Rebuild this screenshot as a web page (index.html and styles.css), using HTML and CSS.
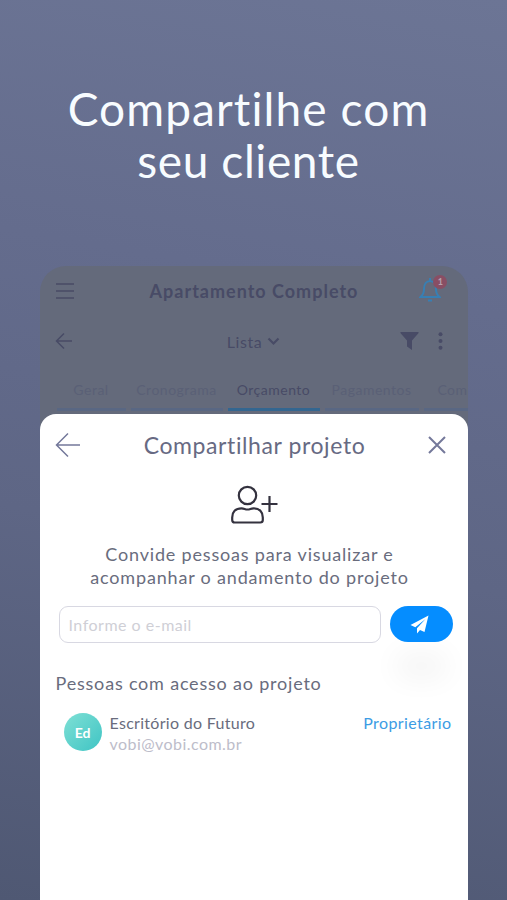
FILE: index.html
```html
<!DOCTYPE html>
<html lang="pt-BR">
<head>
    <meta charset="UTF-8">
    <meta name="viewport" content="width=device-width, initial-scale=1.0">
    <title>Compartilhar projeto</title>
    <link rel="stylesheet" href="styles.css">
</head>
<body>
    <h1 class="headline">Compartilhe com<br><span class="line2">seu cliente</span></h1>

    <main class="phone">
        <header class="top-bar">
            <svg class="menu" width="20" height="18" viewBox="0 0 20 18"><path d="M1 2h18M1 9h18M1 16h18"/></svg>
            <strong class="project-name">Apartamento Completo</strong>
            <div class="bell">
                <svg width="22" height="26" viewBox="0 0 22 26"><path d="M11 1v3M1.500 20h19c-2.500-2-3.500-4-3.500-8 0-5-2.500-8-6-8s-6 3-6 8c0 4-1 6-3.500 8z"/><path d="M9 23.500h4"/></svg>
                <span class="badge">1</span>
            </div>
        </header>

        <div class="view-bar">
            <svg class="back" width="18" height="18" viewBox="0 0 18 18"><path d="M9 1.500L1.500 9 9 16.500M1.500 9H17"/></svg>
            <div class="view-select"><span class="view-name">Lista</span><svg width="13" height="9" viewBox="0 0 13 9"><path d="M1.500 1.500l5 5 5-5"/></svg></div>
            <div class="view-tools">
                <svg class="filter" width="19" height="20" viewBox="0 0 19 20"><path d="M.5 1h18q.3.800-.3 1.500L12 9.500V19l-5-3.500v-6L.8 2.500Q.2 1.800.5 1z"/></svg>
                <svg class="dots" width="5" height="18" viewBox="0 0 5 18"><circle cx="2.500" cy="2.200" r="2"/><circle cx="2.500" cy="9" r="2"/><circle cx="2.500" cy="15.800" r="2"/></svg>
            </div>
        </div>

        <nav class="tabs">
            <span class="tab tab-geral">Geral</span>
            <span class="tab tab-crono">Cronograma</span>
            <span class="tab tab-orc active">Orçamento</span>
            <span class="tab tab-pag">Pagamentos</span>
            <span class="tab tab-com">Com</span>
        </nav>

        <section class="sheet">
            <div class="sheet-header">
                <svg width="26" height="26" viewBox="0 0 26 26"><path d="M13 1.500L1.500 13 13 24.500M1.500 13H25"/></svg>
                <h2 class="sheet-title">Compartilhar projeto</h2>
                <svg class="close" width="18" height="18" viewBox="0 0 18 18"><path d="M1 1l16 16M17 1L1 17"/></svg>
            </div>

            <svg class="user-plus" width="48" height="40" viewBox="0 0 48 40">
                <circle cx="16.500" cy="10.500" r="8.700"/>
                <path d="M10.500 23.300c3 0 3.200 1.200 6 1.200s3-1.200 6-1.200c6 0 9.300 3.700 9.300 9.200v2.500q0 2.500-2.500 2.500H3.700q-2.500 0-2.500-2.500v-2.500c0-5.500 3.300-9.200 9.300-9.200z"/>
                <path d="M38.500 11v16M30.500 19h16"/>
            </svg>
            <p class="invite">Convide pessoas para visualizar e<br>acompanhar o andamento do projeto</p>

            <form class="email-form">
                <input class="email" type="text" placeholder="Informe o e-mail">
                <button class="send" type="button" aria-label="Enviar">
                    <svg width="19" height="19" viewBox="0 0 19 19"><path d="M18.500.5L.5 10l4.800 2.300L15.500 4 7 13.300V18.500l3-3.400 4.500 2z"/></svg>
                </button>
            </form>

            <h3 class="people-title">Pessoas com acesso ao projeto</h3>
            <div class="person">
                <span class="avatar">Ed</span>
                <div class="person-info">
                    <span class="person-name">Escritório do Futuro</span>
                    <span class="person-mail">vobi@vobi.com.br</span>
                </div>
                <span class="role">Proprietário</span>
            </div>
        </section>
    </main>
</body>
</html>
```
FILE: styles.css
```css
* {
    box-sizing: border-box;
}
body {
    margin: 0;
    height: 900px;
    overflow: hidden;
    display: flex;
    flex-direction: column;
    align-items: center;
    font-family: Lato, sans-serif;
    background: linear-gradient(190deg, #6c7595 0%, #646c8d 32%, #5e6685 60%, #4f5873 100%);
}
svg {
    display: block;
    fill: none;
    stroke: currentColor;
    stroke-width: 1.5;
    flex-shrink: 0;
}
.headline {
    margin: 83px 0 0;
    width: 497px;
    align-self: flex-start;
    text-align: center;
    font-size: 46px;
    line-height: 52px;
    font-weight: 400;
    letter-spacing: 1.1px;
    color: #f8fcff;
    white-space: nowrap;
}
.line2 {
    letter-spacing: 0.6px;
}
.phone {
    width: 428px;
    height: 634px;
    margin-top: 79px;
    border-radius: 26px 26px 0 0;
    background: #646a7b;
    color: #484b66;
    overflow: hidden;
    display: flex;
    flex-direction: column;
    flex-shrink: 0;
}

/* dimmed project screen */
.top-bar {
    height: 50px;
    padding: 0 19px 0 15px;
    display: flex;
    align-items: center;
    justify-content: space-between;
}
.project-name {
    margin-left: 14px;
    font-size: 18px;
    letter-spacing: 1px;
}
.bell {
    position: relative;
    width: 29px;
    color: #387fb3;
}
.bell svg {
    stroke-width: 2;
    margin-top: -2px;
}
.badge {
    position: absolute;
    top: -4px;
    left: 14px;
    width: 14px;
    height: 14px;
    border-radius: 50%;
    background: #894e64;
    color: #b5a1af;
    font-size: 9px;
    line-height: 14px;
    font-weight: 700;
    text-align: center;
}
.view-bar {
    height: 50px;
    padding: 0 24px 0 15px;
    display: flex;
    align-items: center;
    justify-content: space-between;
}
.view-select {
    display: flex;
    align-items: center;
    gap: 5px;
    margin-left: 34px;
    font-size: 16px;
    letter-spacing: 0.6px;
}
.view-select svg {
    stroke-width: 2.2;
}
.view-tools {
    display: flex;
    align-items: center;
    gap: 19px;
}
.view-tools svg {
    fill: currentColor;
    stroke: none;
}
.tabs {
    height: 48px;
    padding-left: 17px;
    display: flex;
    gap: 5px;
    font-size: 14px;
    color: #5a6076;
    white-space: nowrap;
}
.tab {
    flex-shrink: 0;
    padding-top: 15px;
    height: 45px;
    line-height: 17px;
    text-align: center;
    letter-spacing: 0.5px;
    border-bottom: 3px solid #596783;
}
.tab-geral {
    width: 69px;
}
.tab-crono {
    width: 92px;
}
.tab-orc {
    width: 92px;
}
.tab-pag {
    width: 94px;
}
.tab-com {
    width: 46px;
    padding-left: 12px;
}
.active {
    color: #484b66;
    border-color: #336690;
}

/* share sheet */
.sheet {
    flex: 1;
    border-radius: 16px 16px 0 0;
    background: #fff;
    color: #696c7d;
    display: flex;
    flex-direction: column;
}
.sheet-header {
    margin-top: 12px;
    height: 38px;
    padding: 0 21px 0 15px;
    display: flex;
    align-items: center;
    justify-content: space-between;
    color: #74789a;
}
.sheet-title {
    margin: 0;
    font-size: 23px;
    font-weight: 400;
    letter-spacing: 0.6px;
    color: #676a83;
}
.sheet-header .close {
    stroke-width: 2;
}
.user-plus {
    margin: 21px 0 0 191px;
    color: #34323f;
    stroke-width: 2.2;
}
.invite {
    margin: 18px 0 0;
    padding-right: 8px;
    text-align: center;
    font-size: 18px;
    line-height: 23px;
    letter-spacing: 0.82px;
    white-space: nowrap;
}
.email-form {
    margin: 17px 15px 0 19px;
    display: flex;
    gap: 9px;
}
.email {
    flex: 1;
    min-width: 0;
    height: 37px;
    padding: 0 9px;
    border: 1.5px solid #d8d8e2;
    border-radius: 9px;
    background: transparent;
    font: 16px Lato, sans-serif;
    letter-spacing: 0.5px;
}
.email::placeholder {
    color: #cfcfd6;
}
.send {
    width: 63px;
    height: 36px;
    padding: 0;
    border: 0;
    border-radius: 18px;
    background: #058dff;
    color: #fff;
    display: flex;
    align-items: center;
    justify-content: center;
    box-shadow: 0 42px 28px -4px rgba(0, 0, 0, 0.045);
}
.send svg {
    fill: currentColor;
    stroke: none;
    margin-right: 4px;
}
.people-title {
    margin: 28px 0 0 16px;
    font-size: 18px;
    line-height: 24px;
    font-weight: 400;
    letter-spacing: 0.8px;
}
.person {
    margin: 18px 16px 0 24px;
    display: flex;
}
.avatar {
    width: 38px;
    height: 38px;
    border-radius: 50%;
    background: linear-gradient(135deg, #7fe0d5, #3fc4c4);
    color: #fff;
    font-size: 14px;
    line-height: 40px;
    font-weight: 700;
    text-align: center;
}
.person-info {
    margin-left: 8px;
    flex: 1;
    display: flex;
    flex-direction: column;
    font-size: 16px;
    line-height: 20px;
}
.person-name {
    letter-spacing: 0.3px;
}
.person-mail {
    letter-spacing: 0.45px;
    line-height: 21px;
    color: #bdbdca;
}
.role {
    font-size: 16px;
    line-height: 20px;
    letter-spacing: 0.4px;
    color: #3c9ce4;
}
```
